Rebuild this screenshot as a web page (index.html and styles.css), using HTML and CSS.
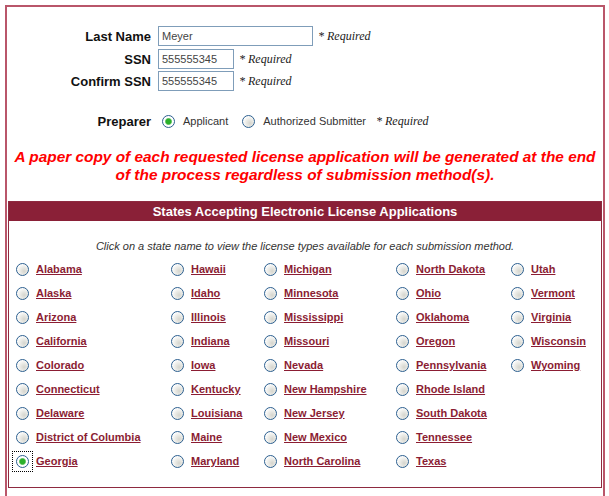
FILE: index.html
```html
<!DOCTYPE html>
<html>
<head>
<meta charset="utf-8">
<link rel="stylesheet" href="styles.css">
</head>
<body>
<div class="outer">
  <div class="form">
    <div class="row r1">
      <label class="lbl">Last Name</label>
      <input class="txt wide" type="text" value="Meyer">
      <span class="req">* Required</span>
    </div>
    <div class="row r2">
      <label class="lbl">SSN</label>
      <input class="txt short" type="text" value="555555345">
      <span class="req">* Required</span>
    </div>
    <div class="row">
      <label class="lbl">Confirm SSN</label>
      <input class="txt short" type="text" value="555555345">
      <span class="req">* Required</span>
    </div>
  </div>
  <div class="prep">
    <span class="lbl">Preparer</span>
    <input class="rad first" type="radio" name="prep" checked>
    <span class="opt">Applicant</span>
    <input class="rad" type="radio" name="prep">
    <span class="opt">Authorized Submitter</span>
    <span class="req preq">* Required</span>
  </div>
  <p class="notice">A paper copy of each requested license application will be generated at the end<br>of the process regardless of submission method(s).</p>
  <div class="states">
    <div class="states-head">States Accepting Electronic License Applications</div>
    <p class="hint">Click on a state name to view the license types available for each submission method.</p>
    <div class="cols">
      <div class="col c1">
        <div class="st"><input class="rad" type="radio" name="st"><a href="#">Alabama</a></div>
        <div class="st"><input class="rad" type="radio" name="st"><a href="#">Alaska</a></div>
        <div class="st"><input class="rad" type="radio" name="st"><a href="#">Arizona</a></div>
        <div class="st"><input class="rad" type="radio" name="st"><a href="#">California</a></div>
        <div class="st"><input class="rad" type="radio" name="st"><a href="#">Colorado</a></div>
        <div class="st"><input class="rad" type="radio" name="st"><a href="#">Connecticut</a></div>
        <div class="st"><input class="rad" type="radio" name="st"><a href="#">Delaware</a></div>
        <div class="st"><input class="rad" type="radio" name="st"><a href="#">District of Columbia</a></div>
        <div class="st"><span class="focus"><input class="rad" type="radio" name="st" checked></span><a href="#">Georgia</a></div>
      </div>
      <div class="col c2">
        <div class="st"><input class="rad" type="radio" name="st"><a href="#">Hawaii</a></div>
        <div class="st"><input class="rad" type="radio" name="st"><a href="#">Idaho</a></div>
        <div class="st"><input class="rad" type="radio" name="st"><a href="#">Illinois</a></div>
        <div class="st"><input class="rad" type="radio" name="st"><a href="#">Indiana</a></div>
        <div class="st"><input class="rad" type="radio" name="st"><a href="#">Iowa</a></div>
        <div class="st"><input class="rad" type="radio" name="st"><a href="#">Kentucky</a></div>
        <div class="st"><input class="rad" type="radio" name="st"><a href="#">Louisiana</a></div>
        <div class="st"><input class="rad" type="radio" name="st"><a href="#">Maine</a></div>
        <div class="st"><input class="rad" type="radio" name="st"><a href="#">Maryland</a></div>
      </div>
      <div class="col c3">
        <div class="st"><input class="rad" type="radio" name="st"><a href="#">Michigan</a></div>
        <div class="st"><input class="rad" type="radio" name="st"><a href="#">Minnesota</a></div>
        <div class="st"><input class="rad" type="radio" name="st"><a href="#">Mississippi</a></div>
        <div class="st"><input class="rad" type="radio" name="st"><a href="#">Missouri</a></div>
        <div class="st"><input class="rad" type="radio" name="st"><a href="#">Nevada</a></div>
        <div class="st"><input class="rad" type="radio" name="st"><a href="#">New Hampshire</a></div>
        <div class="st"><input class="rad" type="radio" name="st"><a href="#">New Jersey</a></div>
        <div class="st"><input class="rad" type="radio" name="st"><a href="#">New Mexico</a></div>
        <div class="st"><input class="rad" type="radio" name="st"><a href="#">North Carolina</a></div>
      </div>
      <div class="col c4">
        <div class="st"><input class="rad" type="radio" name="st"><a href="#">North Dakota</a></div>
        <div class="st"><input class="rad" type="radio" name="st"><a href="#">Ohio</a></div>
        <div class="st"><input class="rad" type="radio" name="st"><a href="#">Oklahoma</a></div>
        <div class="st"><input class="rad" type="radio" name="st"><a href="#">Oregon</a></div>
        <div class="st"><input class="rad" type="radio" name="st"><a href="#">Pennsylvania</a></div>
        <div class="st"><input class="rad" type="radio" name="st"><a href="#">Rhode Island</a></div>
        <div class="st"><input class="rad" type="radio" name="st"><a href="#">South Dakota</a></div>
        <div class="st"><input class="rad" type="radio" name="st"><a href="#">Tennessee</a></div>
        <div class="st"><input class="rad" type="radio" name="st"><a href="#">Texas</a></div>
      </div>
      <div class="col c5">
        <div class="st"><input class="rad" type="radio" name="st"><a href="#">Utah</a></div>
        <div class="st"><input class="rad" type="radio" name="st"><a href="#">Vermont</a></div>
        <div class="st"><input class="rad" type="radio" name="st"><a href="#">Virginia</a></div>
        <div class="st"><input class="rad" type="radio" name="st"><a href="#">Wisconsin</a></div>
        <div class="st"><input class="rad" type="radio" name="st"><a href="#">Wyoming</a></div>
      </div>
    </div>
  </div>
</div>
</body>
</html>
```
FILE: styles.css
```css
html, body {
  margin: 0;
  padding: 0;
  background: #fff;
  font-family: "Liberation Sans", Arial, sans-serif;
  color: #000;
}
.outer {
  margin: 5px 0 0 5px;
  width: 600px;
  min-height: 520px;
  box-sizing: border-box;
  border: 2px solid #b9566a;
  border-bottom: none;
  padding: 0 1px;
}
.form {
  padding-top: 19px;
}
.row {
  display: flex;
  align-items: center;
  height: 20px;
  margin-bottom: 2px;
}
.row.r1 {
  margin-bottom: 3px;
}
.lbl {
  width: 143px;
  text-align: right;
  font-size: 13px;
  font-weight: bold;
  color: #111;
  flex: none;
}
.txt {
  box-sizing: border-box;
  height: 20px;
  margin: 0 0 0 7px;
  border: 1px solid #7f9db9;
  padding: 0 3px;
  font-family: "Liberation Sans", Arial, sans-serif;
  font-size: 11px;
  color: #444;
  background: #fff;
  outline: none;
}
.txt.wide { width: 155px; }
.txt.short { width: 76px; }
.req {
  margin-left: 5px;
  font-family: "Liberation Serif", "Times New Roman", serif;
  font-style: italic;
  font-size: 12px;
  color: #222;
}
.prep {
  display: flex;
  align-items: center;
  height: 20px;
  margin-top: 20px;
}
.rad {
  appearance: none;
  -webkit-appearance: none;
  box-sizing: border-box;
  width: 13px;
  height: 13px;
  margin: 0;
  border: 1px solid #2c5f8f;
  border-radius: 50%;
  background: radial-gradient(circle at 65% 65%, #d5d5ce 0%, #eeeeea 45%, #ffffff 75%);
  flex: none;
}
.rad:checked {
  background: radial-gradient(circle at 50% 50%, #2bb02b 0, #2bb02b 2.5px, #8fd38f 3.3px, #fff 3.8px, #fff 100%);
}
.prep .rad.first { margin-left: 11px; }
.prep .rad { margin-left: 14px; }
.opt {
  margin-left: 8px;
  font-size: 11px;
  color: #333;
}
.req.preq { margin-left: 10px; }
.notice {
  margin: 17px 0 0 0;
  text-align: center;
  white-space: nowrap;
  font-size: 15.4px;
  line-height: 18px;
  font-weight: bold;
  font-style: italic;
  color: #f00;
}
.states {
  margin: 17px 0 0 0;
  border: 1px solid #8e2a40;
  padding-bottom: 14px;
}
.states-head {
  height: 19px;
  line-height: 19px;
  background: #8a2037;
  color: #fff;
  font-weight: bold;
  font-size: 13px;
  text-align: center;
}
.hint {
  margin: 18px 0 4px 0;
  text-align: center;
  font-size: 11px;
  line-height: 14px;
  font-style: italic;
  color: #333;
}
.cols {
  display: flex;
  padding-left: 7px;
}
.col {
  display: flex;
  flex-direction: column;
  flex: none;
}
.c1 { width: 155px; }
.c2 { width: 93px; }
.c3 { width: 132px; }
.c4 { width: 115px; }
.st {
  display: flex;
  align-items: center;
  height: 24px;
}
.st a {
  margin-left: 7px;
  font-size: 11px;
  font-weight: bold;
  color: #8b1d33;
  text-decoration: underline;
}
.focus {
  display: flex;
  align-items: center;
  justify-content: center;
  margin: 0 -4px;
  width: 21px;
  height: 21px;
  box-sizing: border-box;
  border: 1px dotted #000;
  flex: none;
}
```
